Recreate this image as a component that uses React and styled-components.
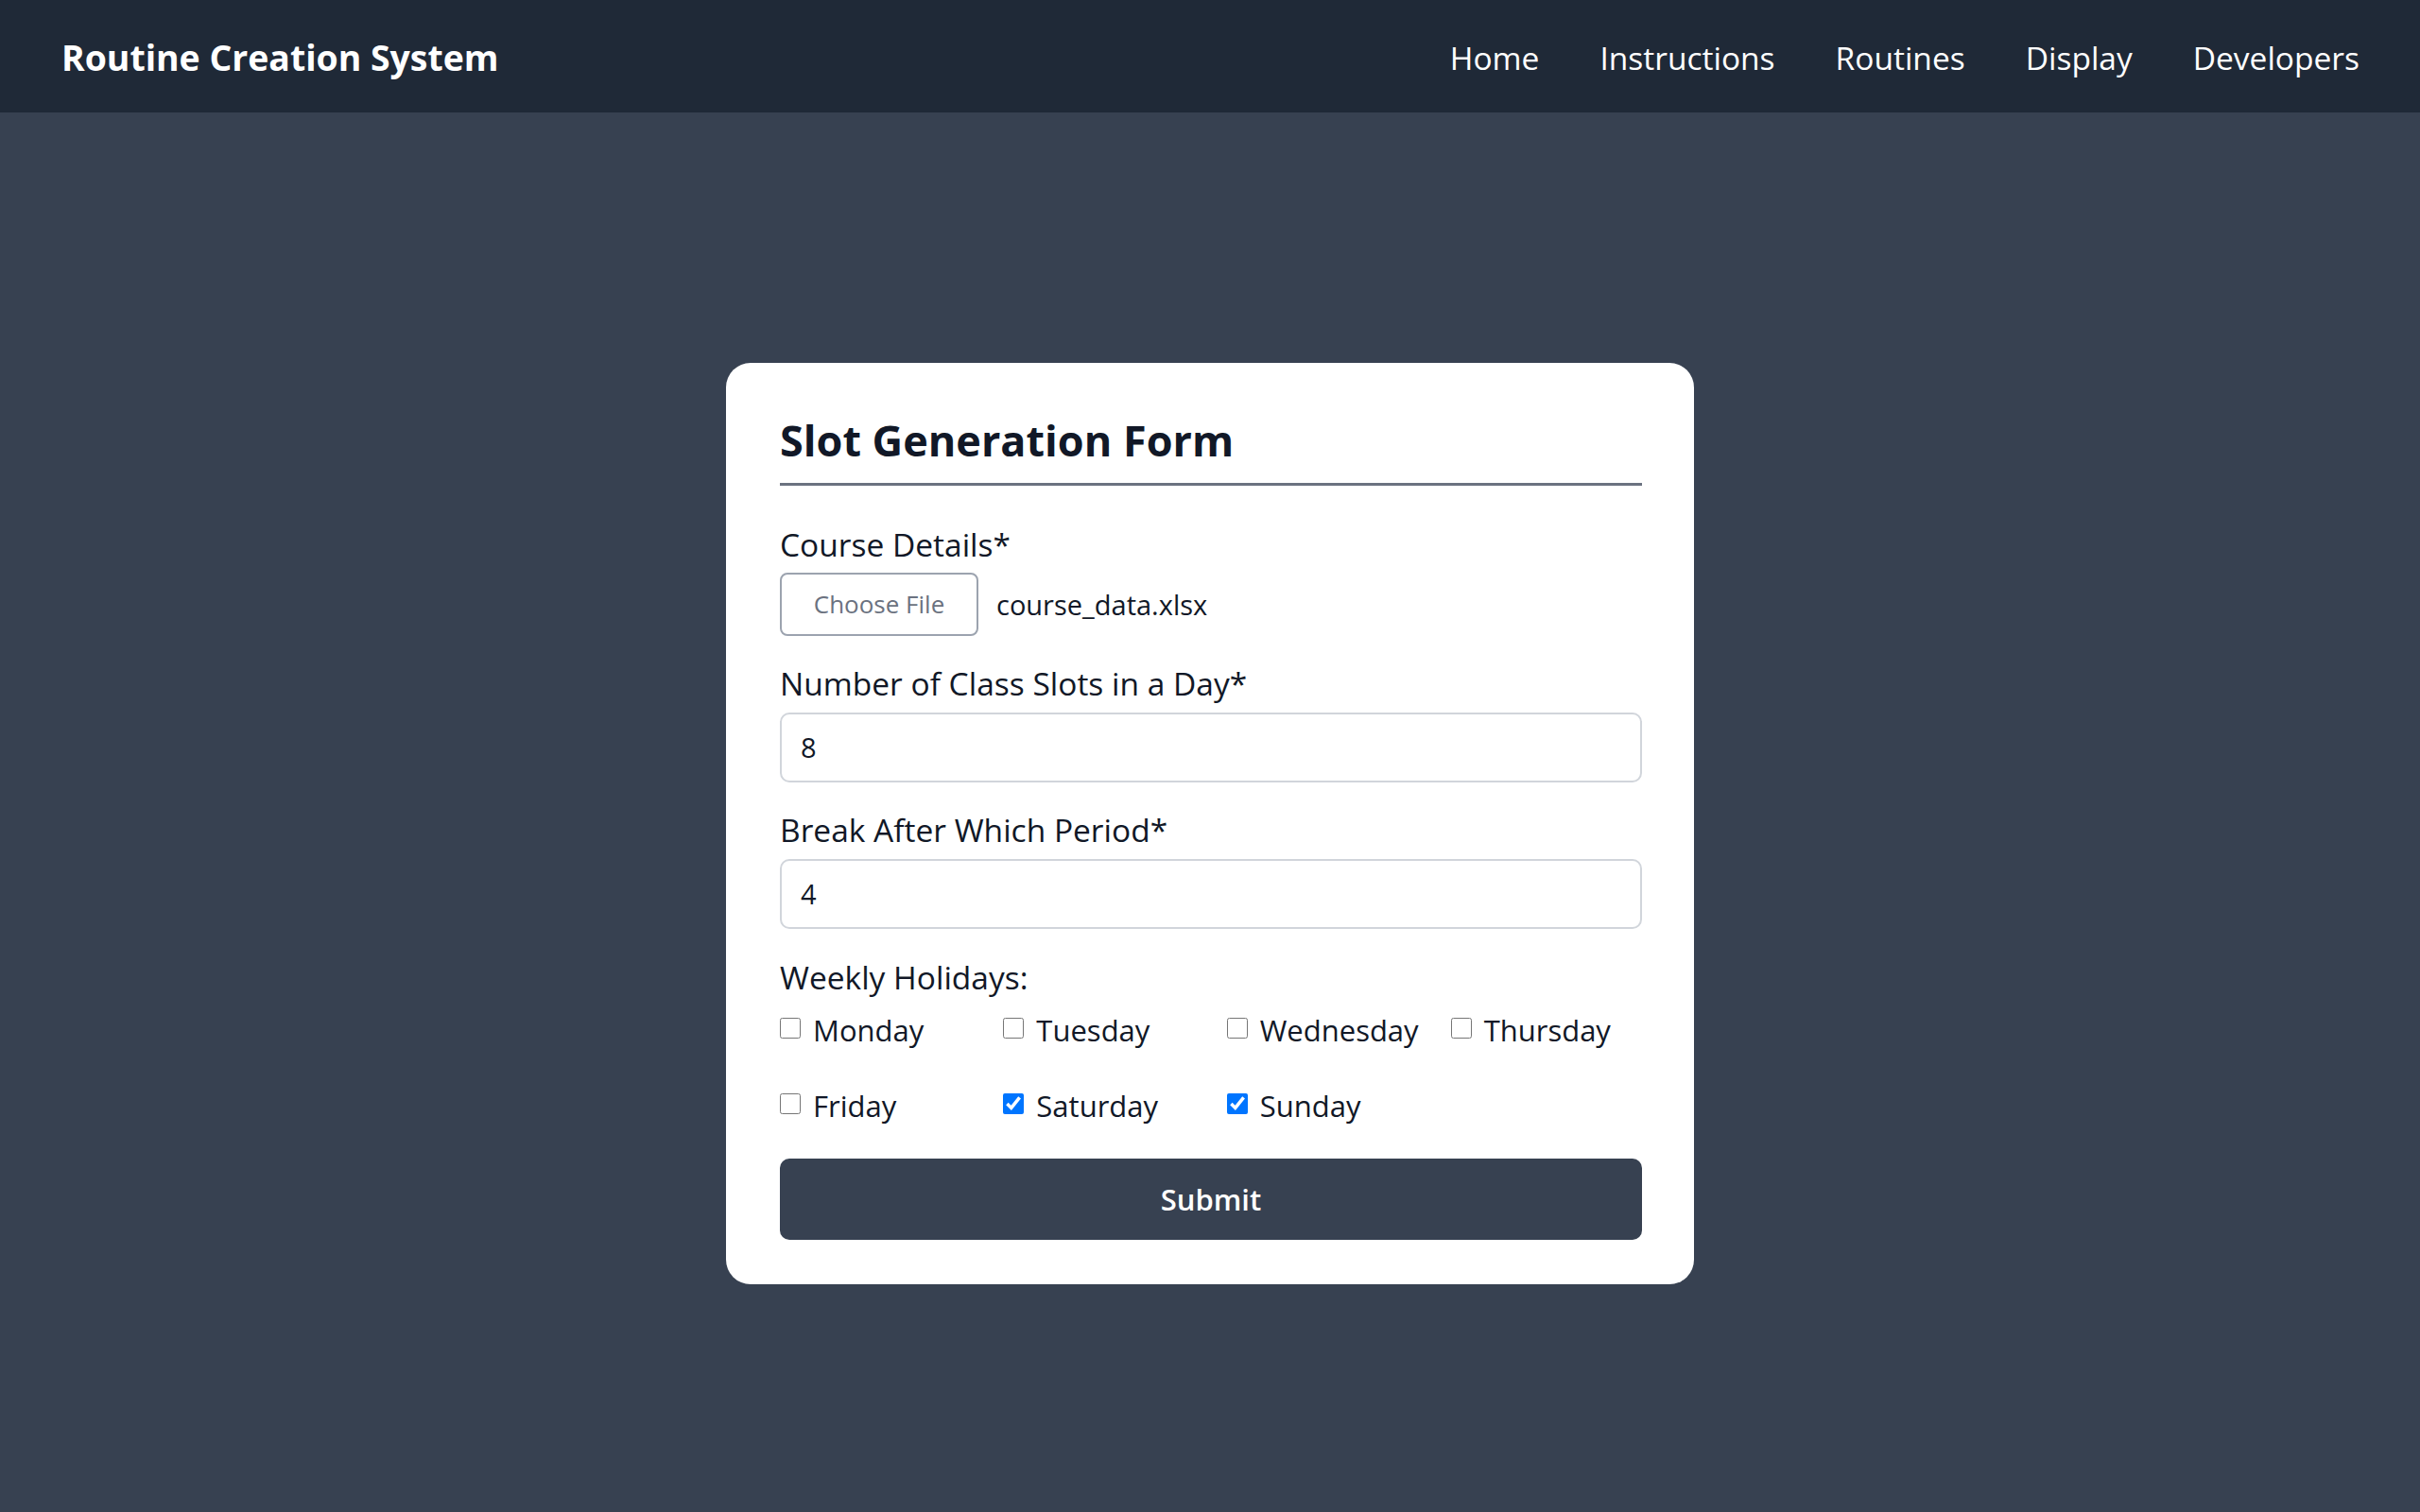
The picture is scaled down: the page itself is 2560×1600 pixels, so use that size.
import React, { useState } from 'react'
import styled, { createGlobalStyle } from 'styled-components'

const GlobalStyle = createGlobalStyle`
    html, body {
        margin: 0;
        padding: 0;
        background: #374151;
        font-family: "Open Sans", "Noto Sans", sans-serif;
    }
    * { box-sizing: border-box; }
`

const Page = styled.div`
    min-height: 100vh;
    display: flex;
    flex-direction: column;
    background: #374151;
`

const NavBar = styled.nav`
    height: 119px;
    background: #1f2937;
    display: flex;
    align-items: center;
    justify-content: space-between;
    padding: 2px 64px 0 65px;
`

const Brand = styled.div`
    color: #ffffff;
    font-size: 37.4px;
    font-weight: 700;
`

const NavLinks = styled.ul`
    display: flex;
    gap: 64px;
    list-style: none;
    margin: 0;
    padding: 0;
`

const NavLink = styled.li`
    color: #ffffff;
    font-size: 33.5px;
    cursor: pointer;
`

const Main = styled.main`
    flex: 1;
    display: flex;
    align-items: center;
    justify-content: center;
    padding-top: 23px;
`

const Card = styled.form`
    width: 1024px;
    background: #ffffff;
    border-radius: 26px;
    padding: 52px 55px 47px 57px;
    display: flex;
    flex-direction: column;
`

const Heading = styled.h2`
    margin: 0 0 40px 0;
    font-size: 45px;
    line-height: 59px;
    font-weight: 700;
    color: #111827;
    padding-bottom: 16px;
    border-bottom: 3px solid #6b7280;
`

const Field = styled.div`
    display: flex;
    flex-direction: column;
    gap: ${(p) => p.gap || 9}px;
    margin-bottom: ${(p) => p.mb || 28}px;
`

const Label = styled.label`
    font-size: 33.5px;
    line-height: 44px;
    color: #111827;
`

const FileRow = styled.div`
    display: flex;
    align-items: center;
    gap: 19px;
`

const FileButton = styled.button`
    width: 210px;
    height: 67px;
    background: #ffffff;
    border: 2px solid #9ca3af;
    border-radius: 8px;
    font-family: inherit;
    font-size: 26px;
    color: #6b7280;
    cursor: pointer;
`

const FileName = styled.span`
    font-size: 29px;
    color: #111827;
`

const TextInput = styled.input`
    height: 74px;
    width: 100%;
    border: 2px solid #d1d5db;
    border-radius: 10px;
    padding: 0 20px;
    font-family: inherit;
    font-size: 29px;
    color: #111827;
    outline: none;
`

const DayGrid = styled.div`
    display: grid;
    grid-template-columns: repeat(4, 1fr);
    column-gap: 34px;
    row-gap: 36px;
    margin-top: 3px;
`

const DayOption = styled.label`
    display: flex;
    align-items: center;
    gap: 13px;
    height: 44px;
    font-size: 31px;
    color: #111827;
    cursor: pointer;
`

const DayBox = styled.input`
    width: 22px;
    height: 22px;
    margin: 0;
    margin-top: -4px;
    accent-color: #0075ff;
`

const SubmitButton = styled.button`
    height: 86px;
    width: 100%;
    background: #374151;
    border: none;
    border-radius: 10px;
    color: #ffffff;
    font-family: inherit;
    font-size: 31px;
    font-weight: 600;
    cursor: pointer;
`

const days = ['Monday', 'Tuesday', 'Wednesday', 'Thursday', 'Friday', 'Saturday', 'Sunday']

const App = () => {
    const [slots, setSlots] = useState('8')
    const [breakAfter, setBreakAfter] = useState('4')
    const [holidays, setHolidays] = useState(['Saturday', 'Sunday'])

    const toggle = (d) => {
        setHolidays((h) => (h.includes(d) ? h.filter((x) => x !== d) : [...h, d]))
    }

    return (
        <Page>
            <GlobalStyle />
            <NavBar>
                <Brand>Routine Creation System</Brand>
                <NavLinks>
                    <NavLink>Home</NavLink>
                    <NavLink>Instructions</NavLink>
                    <NavLink>Routines</NavLink>
                    <NavLink>Display</NavLink>
                    <NavLink>Developers</NavLink>
                </NavLinks>
            </NavBar>
            <Main>
                <Card onSubmit={(e) => e.preventDefault()}>
                    <Heading>Slot Generation Form</Heading>

                    <Field gap={8}>
                        <Label>Course Details*</Label>
                        <FileRow>
                            <FileButton type='button'>Choose File</FileButton>
                            <FileName>course_data.xlsx</FileName>
                        </FileRow>
                    </Field>

                    <Field>
                        <Label>Number of Class Slots in a Day*</Label>
                        <TextInput value={slots} onChange={(e) => setSlots(e.target.value)} />
                    </Field>

                    <Field mb={29}>
                        <Label>Break After Which Period*</Label>
                        <TextInput value={breakAfter} onChange={(e) => setBreakAfter(e.target.value)} />
                    </Field>

                    <Field gap={0} mb={34}>
                        <Label>Weekly Holidays:</Label>
                        <DayGrid>
                            {days.map((d) => (
                                <DayOption key={d}>
                                    <DayBox
                                        type='checkbox'
                                        checked={holidays.includes(d)}
                                        onChange={() => toggle(d)}
                                    />
                                    {d}
                                </DayOption>
                            ))}
                        </DayGrid>
                    </Field>

                    <SubmitButton type='submit'>Submit</SubmitButton>
                </Card>
            </Main>
        </Page>
    )
}

export default App
